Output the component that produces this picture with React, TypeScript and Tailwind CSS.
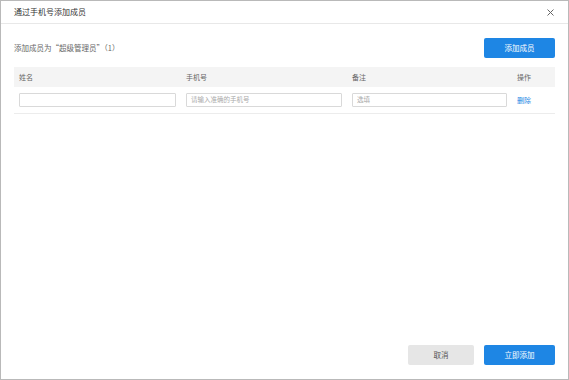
import React from "react";

const font = { fontFamily: '"Noto Sans CJK SC", "Noto Sans", sans-serif' };

export default function App() {
  return (
    <div
      className="flex h-[380px] w-[569px] flex-col border border-[#b9b9b9] bg-white text-[#333]"
      style={font}
    >
      <div className="flex h-[23px] shrink-0 items-center justify-between border-b border-[#e8e8e8] pl-[13px] pr-[14px]">
        <span className="text-[8px] leading-none text-[#333]">通过手机号添加成员</span>
        <svg width="7" height="7" viewBox="0 0 7 7" className="text-[#666]">
          <path d="M0.5 0.5L6.5 6.5M6.5 0.5L0.5 6.5" stroke="currentColor" strokeWidth="1" />
        </svg>
      </div>

      <div className="flex flex-1 flex-col px-[13px]">
        <div className="mt-[14px] flex items-center justify-between">
          <span className="text-[7.5px] text-[#666]">添加成员为“超级管理员”（1）</span>
          <button className="h-[20px] w-[71px] rounded-[2px] bg-[#1e86e4] text-[7.5px] text-white">
            添加成员
          </button>
        </div>

        <div className="mt-[9px]">
          <div className="grid h-[20px] grid-cols-[167px_166px_165px_1fr] items-center bg-[#f4f4f4] pl-[5px] text-[7px] text-[#666]">
            <span>姓名</span>
            <span>手机号</span>
            <span>备注</span>
            <span>操作</span>
          </div>
          <div className="grid h-[27px] grid-cols-[167px_166px_165px_1fr] items-center border-b border-[#ececec] pl-[5px] text-[7px]">
            <div className="pr-[10px]">
              <div className="h-[14px] rounded-[1px] border border-[#d9d9d9]" />
            </div>
            <div className="pr-[10px]">
              <div className="flex h-[14px] items-center rounded-[1px] border border-[#d9d9d9] pl-[4px] text-[6.5px] text-[#aaa]">
                请输入准确的手机号
              </div>
            </div>
            <div className="pr-[10px]">
              <div className="flex h-[14px] items-center rounded-[1px] border border-[#d9d9d9] pl-[4px] text-[6.5px] text-[#aaa]">
                选填
              </div>
            </div>
            <span className="text-[#1e86e4]">删除</span>
          </div>
        </div>
      </div>

      <div className="flex shrink-0 justify-end gap-[10px] pb-[14px] pr-[13px]">
        <button className="h-[20px] w-[66px] rounded-[2px] bg-[#e6e6e6] text-[7.5px] text-[#555]">
          取消
        </button>
        <button className="h-[20px] w-[71px] rounded-[2px] bg-[#1e86e4] text-[7.5px] text-white">
          立即添加
        </button>
      </div>
    </div>
  );
}
